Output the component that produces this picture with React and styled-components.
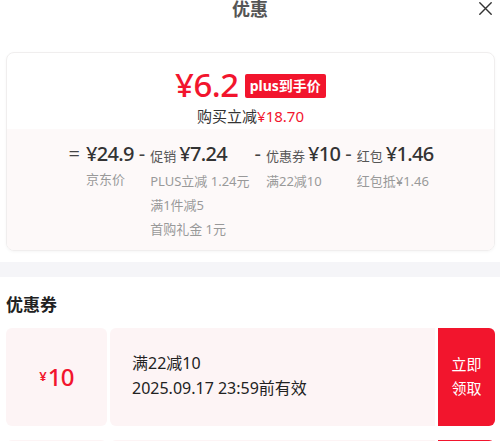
import React from 'react';
import styled, { createGlobalStyle } from 'styled-components';

const RED = '#f2152d';

const GlobalStyle = createGlobalStyle`
    * {
        box-sizing: border-box;
    }

    body {
        margin: 0;
        background: #fff;
        font-family: "Noto Sans", "Noto Sans CJK SC", sans-serif;
        color: #333;
    }
`;

// Header
const Header = styled.header`
    display: grid;
    grid-template-columns: 1fr auto 1fr;
    align-items: start;
    height: 44px;
`;

const Title = styled.h1`
    grid-column: 2;
    margin: 0;
    font-size: 18px;
    line-height: 18px;
    font-weight: 700;
    color: #555;
`;

const Close = styled.button`
    grid-column: 3;
    justify-self: end;
    margin: 2px 8px 0 0;
    padding: 0;
    border: 0;
    background: none;
    width: 13px;
    height: 13px;
    display: flex;
    svg {
        display: block;
    }
`;

// Summary card
const Card = styled.section`
    margin: 8px 5px 0 6px;
    border: 1px solid #f0eeee;
    border-radius: 8px;
    box-shadow: 0 1px 3px rgba(0, 0, 0, 0.04);
    overflow: hidden;
`;

const Top = styled.div`
    height: 76px;
    padding-top: 15px;
    display: flex;
    flex-direction: column;
    align-items: center;
`;

const PriceRow = styled.div`
    display: flex;
    align-items: center;
    gap: 6px;
    height: 34px;
`;

const Price = styled.span`
    color: ${RED};
    font-size: 33px;
    line-height: 34px;
    font-weight: 500;
    letter-spacing: -0.5px;
`;

const Badge = styled.span`
    background: ${RED};
    color: #fff;
    font-size: 14px;
    font-weight: 700;
    line-height: 24px;
    height: 24px;
    padding: 0 5px;
    border-radius: 2px;
    margin-top: 2px;
`;

const Saving = styled.div`
    margin-top: 4px;
    font-size: 15px;
    line-height: 20px;
    color: #333;
    em {
        font-style: normal;
        color: ${RED};
    }
`;

const Bottom = styled.div`
    background: #fdf9f9;
    padding: 13px 0 9px;
`;

const Formula = styled.div`
    display: flex;
    justify-content: center;
    align-items: flex-start;
    gap: 5px;
`;

const Op = styled.span`
    font-size: 20px;
    line-height: 24px;
    color: #444;
    padding: 0 ${props => props.pad || 0}px;
`;

const Item = styled.div`
    display: flex;
    flex-direction: column;
`;

const ItemHead = styled.div`
    display: flex;
    align-items: baseline;
    gap: 3px;
    line-height: 24px;
    margin-bottom: 1px;
`;

const Label = styled.span`
    font-size: 13px;
    color: #555;
`;

const Value = styled.span`
    font-size: 20px;
    font-weight: 500;
    color: #333;
    letter-spacing: -0.7px;
`;

const Note = styled.div`
    font-size: 13px;
    line-height: 24px;
    color: #999;
    white-space: nowrap;
`;

const Band = styled.div`
    height: 15px;
    margin-top: 11px;
    background: #f5f5f8;
`;

// Coupons
const Section = styled.section`
    padding: 16px 5px 0 6px;
`;

const SectionTitle = styled.h2`
    margin: 0 0 11px;
    font-size: 17px;
    line-height: 24px;
    font-weight: 700;
    color: #222;
`;

const CouponList = styled.div`
    display: flex;
    flex-direction: column;
    gap: 14px;
`;

const Coupon = styled.div`
    display: flex;
    height: 98px;
    gap: 3px;
`;

const Stub = styled.div`
    width: 101px;
    background: #fdf4f5;
    border-radius: 6px;
    display: flex;
    align-items: center;
    justify-content: center;
    color: ${RED};
    padding-bottom: 2px;
    small {
        font-size: 13px;
        font-weight: 600;
        margin-right: 1px;
    }
    strong {
        font-size: 24px;
        font-weight: 500;
        letter-spacing: -0.8px;
    }
`;

const Body = styled.div`
    flex: 1;
    background: #fdf4f5;
    border-radius: 6px 0 0 6px;
    padding: 23px 0 0 22px;
    font-size: 16px;
    line-height: 25px;
    color: #222;
`;

const Claim = styled.button`
    width: 57px;
    border: 0;
    margin: 0;
    background: ${RED};
    border-radius: 0 6px 6px 0;
    color: #fff;
    font-family: inherit;
    font-size: 15px;
    line-height: 24px;
    padding: 0 0 2px;
`;

const coupons = [
    { amount: '10', rule: '满22减10', until: '2025.09.17 23:59前有效' },
    { amount: '5', rule: '满39减5', until: '2025.09.30 23:59前有效' },
];

function App() {
    return (
        <>
            <GlobalStyle />
            <Header>
                <Title>优惠</Title>
                <Close aria-label="关闭">
                    <svg width="13" height="13" viewBox="0 0 13 13">
                        <path
                            d="M0.8 0.8 L12.2 12.2 M12.2 0.8 L0.8 12.2"
                            stroke="#333"
                            strokeWidth="1.4"
                            strokeLinecap="round"
                        />
                    </svg>
                </Close>
            </Header>

            <Card>
                <Top>
                    <PriceRow>
                        <Price>¥6.2</Price>
                        <Badge>plus到手价</Badge>
                    </PriceRow>
                    <Saving>
                        购买立减<em>¥18.70</em>
                    </Saving>
                </Top>
                <Bottom>
                    <Formula>
                        <Op pad={1}>=</Op>
                        <Item>
                            <ItemHead>
                                <Value>¥24.9</Value>
                            </ItemHead>
                            <Note>京东价</Note>
                        </Item>
                        <Op>-</Op>
                        <Item>
                            <ItemHead>
                                <Label>促销</Label>
                                <Value>¥7.24</Value>
                            </ItemHead>
                            <Note>PLUS立减 1.24元</Note>
                            <Note>满1件减5</Note>
                            <Note>首购礼金 1元</Note>
                        </Item>
                        <Op>-</Op>
                        <Item>
                            <ItemHead>
                                <Label>优惠券</Label>
                                <Value>¥10</Value>
                            </ItemHead>
                            <Note>满22减10</Note>
                        </Item>
                        <Op>-</Op>
                        <Item>
                            <ItemHead>
                                <Label>红包</Label>
                                <Value>¥1.46</Value>
                            </ItemHead>
                            <Note>红包抵¥1.46</Note>
                        </Item>
                    </Formula>
                </Bottom>
            </Card>

            <Band />

            <Section>
                <SectionTitle>优惠券</SectionTitle>
                <CouponList>
                    {coupons.map((c, i) => (
                        <Coupon key={i}>
                            <Stub>
                                <small>¥</small>
                                <strong>{c.amount}</strong>
                            </Stub>
                            <Body>
                                <div>{c.rule}</div>
                                <div>{c.until}</div>
                            </Body>
                            <Claim>
                                立即
                                <br />
                                领取
                            </Claim>
                        </Coupon>
                    ))}
                </CouponList>
            </Section>
        </>
    );
}

export default App;
